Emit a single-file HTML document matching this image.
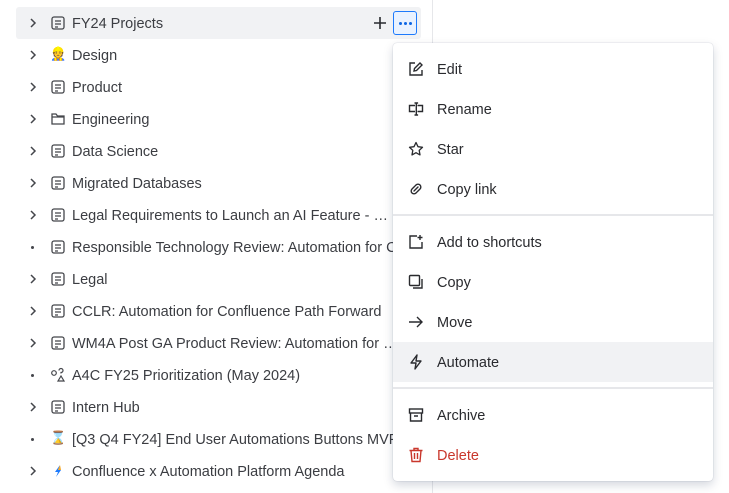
<!DOCTYPE html>
<html><head><style>
*{margin:0;padding:0;box-sizing:border-box}
body{width:729px;height:493px;background:#fff;font-family:"Liberation Sans","Noto Sans CJK JP",sans-serif;position:relative;overflow:hidden;color:#44546f}
.side{position:absolute;left:432px;top:0;width:1px;height:493px;background:#e6e7ea}
.row{position:absolute;left:16px;width:405px;height:24px;font-size:14.5px;color:#3b3d42}
.row .chev{position:absolute;left:11px;top:6px}
.row .dot{position:absolute;left:15px;top:11px;width:3px;height:3px;border-radius:50%;background:#44464b}
.row .ic{position:absolute;left:34px;top:4px}
.row .t{position:absolute;left:56px;top:4px;white-space:nowrap;width:334px;overflow:hidden;text-overflow:ellipsis;line-height:18px}
.mi{position:absolute;left:0;width:320px;height:40px;font-size:14.5px;color:#292a2e}
.mi svg{position:absolute;left:15px;top:12px}
.mi span{position:absolute;left:44px;top:12px;line-height:18px}
.sep{position:absolute;left:0;width:320px;height:2px;background:#e6e7ea}
.menu{position:absolute;left:393px;top:43px;width:320px;height:438px;background:#fff;border-radius:4px;box-shadow:0 4px 10px rgba(9,30,66,.18),0 0 1px rgba(9,30,66,.3)}
</style></head><body>
<div class="side"></div>
<div style="position:absolute;left:16px;top:7px;width:405px;height:32px;background:#f1f2f4;border-radius:3px"></div>

<div class="row" style="top:11px">
<svg class="chev" width="12" height="12" viewBox="0 0 12 12"><path d="M4 2l4 4-4 4" fill="none" stroke="#44464b" stroke-width="1.5"/></svg>
<svg class="ic" width="16" height="16" viewBox="0 0 16 16"><rect x="2" y="2" width="12" height="12" rx="2" fill="none" stroke="#44464b" stroke-width="1.3"/><path d="M5 6h6M5 9h6M5 12h3" stroke="#44464b" stroke-width="1.3"/></svg>
<div class="t">FY24 Projects</div>
<svg style="position:absolute;left:357px;top:5px" width="14" height="14" viewBox="0 0 14 14"><path d="M7 1v12M1 7h12" stroke="#292a2e" stroke-width="1.6"/></svg>
<div style="position:absolute;left:377px;top:0;width:24px;height:24px;border:1px solid #1d7afc;border-radius:3px;background:#e9f2ff"><div style="position:absolute;left:5px;top:10px;font-size:0"><span style="display:inline-block;width:3px;height:3px;background:#0c66e4;border-radius:50%;margin-right:2px"></span><span style="display:inline-block;width:3px;height:3px;background:#0c66e4;border-radius:50%;margin-right:2px"></span><span style="display:inline-block;width:3px;height:3px;background:#0c66e4;border-radius:50%"></span></div></div>
</div>

<div class="row" style="top:43px"><svg class="chev" width="12" height="12" viewBox="0 0 12 12"><path d="M4 2l4 4-4 4" fill="none" stroke="#44464b" stroke-width="1.5"/></svg><span class="ic" style="font-size:13px;top:3px">👷</span><div class="t">Design</div></div>
<div class="row" style="top:75px"><svg class="chev" width="12" height="12" viewBox="0 0 12 12"><path d="M4 2l4 4-4 4" fill="none" stroke="#44464b" stroke-width="1.5"/></svg><svg class="ic" width="16" height="16" viewBox="0 0 16 16"><rect x="2" y="2" width="12" height="12" rx="2" fill="none" stroke="#44464b" stroke-width="1.3"/><path d="M5 6h6M5 9h6M5 12h3" stroke="#44464b" stroke-width="1.3"/></svg><div class="t">Product</div></div>
<div class="row" style="top:107px"><svg class="chev" width="12" height="12" viewBox="0 0 12 12"><path d="M4 2l4 4-4 4" fill="none" stroke="#44464b" stroke-width="1.5"/></svg><svg class="ic" width="16" height="16" viewBox="0 0 16 16"><path d="M2 4v9h12V5H7.5L6 3H2z M2 6h12" fill="none" stroke="#44464b" stroke-width="1.3"/></svg><div class="t">Engineering</div></div>
<div class="row" style="top:139px"><svg class="chev" width="12" height="12" viewBox="0 0 12 12"><path d="M4 2l4 4-4 4" fill="none" stroke="#44464b" stroke-width="1.5"/></svg><svg class="ic" width="16" height="16" viewBox="0 0 16 16"><rect x="2" y="2" width="12" height="12" rx="2" fill="none" stroke="#44464b" stroke-width="1.3"/><path d="M5 6h6M5 9h6M5 12h3" stroke="#44464b" stroke-width="1.3"/></svg><div class="t">Data Science</div></div>
<div class="row" style="top:171px"><svg class="chev" width="12" height="12" viewBox="0 0 12 12"><path d="M4 2l4 4-4 4" fill="none" stroke="#44464b" stroke-width="1.5"/></svg><svg class="ic" width="16" height="16" viewBox="0 0 16 16"><rect x="2" y="2" width="12" height="12" rx="2" fill="none" stroke="#44464b" stroke-width="1.3"/><path d="M5 6h6M5 9h6M5 12h3" stroke="#44464b" stroke-width="1.3"/></svg><div class="t">Migrated Databases</div></div>
<div class="row" style="top:203px"><svg class="chev" width="12" height="12" viewBox="0 0 12 12"><path d="M4 2l4 4-4 4" fill="none" stroke="#44464b" stroke-width="1.5"/></svg><svg class="ic" width="16" height="16" viewBox="0 0 16 16"><rect x="2" y="2" width="12" height="12" rx="2" fill="none" stroke="#44464b" stroke-width="1.3"/><path d="M5 6h6M5 9h6M5 12h3" stroke="#44464b" stroke-width="1.3"/></svg><div class="t" style="width:321px">Legal Requirements to Launch an AI Feature - Gen AI</div></div>
<div class="row" style="top:235px"><div class="dot"></div><svg class="ic" width="16" height="16" viewBox="0 0 16 16"><rect x="2" y="2" width="12" height="12" rx="2" fill="none" stroke="#44464b" stroke-width="1.3"/><path d="M5 6h6M5 9h6M5 12h3" stroke="#44464b" stroke-width="1.3"/></svg><div class="t" style="text-overflow:clip;width:321px">Responsible Technology Review: Automation for Confluence</div></div>
<div class="row" style="top:267px"><svg class="chev" width="12" height="12" viewBox="0 0 12 12"><path d="M4 2l4 4-4 4" fill="none" stroke="#44464b" stroke-width="1.5"/></svg><svg class="ic" width="16" height="16" viewBox="0 0 16 16"><rect x="2" y="2" width="12" height="12" rx="2" fill="none" stroke="#44464b" stroke-width="1.3"/><path d="M5 6h6M5 9h6M5 12h3" stroke="#44464b" stroke-width="1.3"/></svg><div class="t">Legal</div></div>
<div class="row" style="top:299px"><svg class="chev" width="12" height="12" viewBox="0 0 12 12"><path d="M4 2l4 4-4 4" fill="none" stroke="#44464b" stroke-width="1.5"/></svg><svg class="ic" width="16" height="16" viewBox="0 0 16 16"><rect x="2" y="2" width="12" height="12" rx="2" fill="none" stroke="#44464b" stroke-width="1.3"/><path d="M5 6h6M5 9h6M5 12h3" stroke="#44464b" stroke-width="1.3"/></svg><div class="t">CCLR: Automation for Confluence Path Forward</div></div>
<div class="row" style="top:331px"><svg class="chev" width="12" height="12" viewBox="0 0 12 12"><path d="M4 2l4 4-4 4" fill="none" stroke="#44464b" stroke-width="1.5"/></svg><svg class="ic" width="16" height="16" viewBox="0 0 16 16"><rect x="2" y="2" width="12" height="12" rx="2" fill="none" stroke="#44464b" stroke-width="1.3"/><path d="M5 6h6M5 9h6M5 12h3" stroke="#44464b" stroke-width="1.3"/></svg><div class="t" style="width:328px">WM4A Post GA Product Review: Automation for Confluence</div></div>
<div class="row" style="top:363px"><div class="dot"></div><svg class="ic" width="16" height="16" viewBox="0 0 16 16"><circle cx="4" cy="6" r="2.3" fill="none" stroke="#44464b" stroke-width="1.2"/><path d="M8 14l3-5 3 5z" fill="none" stroke="#44464b" stroke-width="1.2"/><path d="M9 3.5a2 2 0 1 1 2 2v1" fill="none" stroke="#44464b" stroke-width="1.2"/></svg><div class="t">A4C FY25 Prioritization (May 2024)</div></div>
<div class="row" style="top:395px"><svg class="chev" width="12" height="12" viewBox="0 0 12 12"><path d="M4 2l4 4-4 4" fill="none" stroke="#44464b" stroke-width="1.5"/></svg><svg class="ic" width="16" height="16" viewBox="0 0 16 16"><rect x="2" y="2" width="12" height="12" rx="2" fill="none" stroke="#44464b" stroke-width="1.3"/><path d="M5 6h6M5 9h6M5 12h3" stroke="#44464b" stroke-width="1.3"/></svg><div class="t">Intern Hub</div></div>
<div class="row" style="top:427px"><div class="dot"></div><span class="ic" style="font-size:13px;top:3px">⌛</span><div class="t" style="text-overflow:clip;width:321px">[Q3 Q4 FY24] End User Automations Buttons MVP</div></div>
<div class="row" style="top:459px"><svg class="chev" width="12" height="12" viewBox="0 0 12 12"><path d="M4 2l4 4-4 4" fill="none" stroke="#44464b" stroke-width="1.5"/></svg><svg class="ic" width="16" height="16" viewBox="0 0 16 16"><path d="M10 2L5 9h3l-2 5 5-7H8z" fill="#1d7afc"/><path d="M10 2L8 7h3z" fill="#f5a623"/></svg><div class="t">Confluence x Automation Platform Agenda</div></div>

<div class="menu">
<div class="mi" style="top:6px"><svg width="16" height="16" viewBox="0 0 16 16"><path d="M7 2H2v12h12V9" fill="none" stroke="#292a2e" stroke-width="1.4"/><path d="M6 10l.5-2.5L12 2l2 2-5.5 5.5z" fill="none" stroke="#292a2e" stroke-width="1.4"/></svg><span>Edit</span></div>
<div class="mi" style="top:46px"><svg width="16" height="16" viewBox="0 0 16 16"><path d="M7 4.5H1.5v6H7M9.5 4.5H14.5v6H9.5M8.3 2v12M6.5 2h3.6M6.5 14h3.6" fill="none" stroke="#292a2e" stroke-width="1.4"/></svg><span>Rename</span></div>
<div class="mi" style="top:86px"><svg width="16" height="16" viewBox="0 0 16 16"><path d="M8 1.5l2 4.2 4.5.6-3.3 3.1.8 4.5L8 11.7 4 13.9l.8-4.5L1.5 6.3 6 5.7z" fill="none" stroke="#292a2e" stroke-width="1.3" stroke-linejoin="round"/></svg><span>Star</span></div>
<div class="mi" style="top:126px"><svg width="16" height="16" viewBox="0 0 16 16"><path d="M6 10l4-4M6.5 5.5L4 8a2.8 2.8 0 0 0 4 4l1-1M9.5 10.5L12 8a2.8 2.8 0 0 0-4-4L7 5" fill="none" stroke="#292a2e" stroke-width="1.4" stroke-linecap="round"/></svg><span>Copy link</span></div>
<div class="sep" style="top:171px"></div>
<div class="mi" style="top:179px"><svg width="16" height="16" viewBox="0 0 16 16"><path d="M9 2H2v12h12V8" fill="none" stroke="#292a2e" stroke-width="1.4"/><path d="M12 1v5M9.5 3.5h5" stroke="#292a2e" stroke-width="1.4"/></svg><span>Add to shortcuts</span></div>
<div class="mi" style="top:219px"><svg width="16" height="16" viewBox="0 0 16 16"><rect x="1.5" y="1.5" width="10" height="10" rx="1" fill="none" stroke="#292a2e" stroke-width="1.4"/><path d="M14 5v9H5" fill="none" stroke="#292a2e" stroke-width="1.4"/></svg><span>Copy</span></div>
<div class="mi" style="top:259px"><svg width="16" height="16" viewBox="0 0 16 16"><path d="M1 8h13M9 3l5 5-5 5" fill="none" stroke="#292a2e" stroke-width="1.4"/></svg><span>Move</span></div>
<div class="mi" style="top:299px;background:#f1f2f4"><svg width="16" height="16" viewBox="0 0 16 16"><path d="M9 1L3 9h5l-1 6 6-8H8z" fill="none" stroke="#292a2e" stroke-width="1.4" stroke-linejoin="round"/></svg><span>Automate</span></div>
<div class="sep" style="top:344px"></div>
<div class="mi" style="top:352px"><svg width="16" height="16" viewBox="0 0 16 16"><rect x="1.5" y="2" width="13" height="4" fill="none" stroke="#292a2e" stroke-width="1.4"/><path d="M2.5 6v8h11V6M6 9h4" fill="none" stroke="#292a2e" stroke-width="1.4"/></svg><span>Archive</span></div>
<div class="mi" style="top:392px;color:#c9372c"><svg width="16" height="16" viewBox="0 0 16 16"><path d="M1.5 3.5h13M6 3.5V1.5h4v2M3 3.5l1 11h8l1-11M6.5 6v6M9.5 6v6" fill="none" stroke="#c9372c" stroke-width="1.4"/></svg><span>Delete</span></div>
</div>
</body></html>
